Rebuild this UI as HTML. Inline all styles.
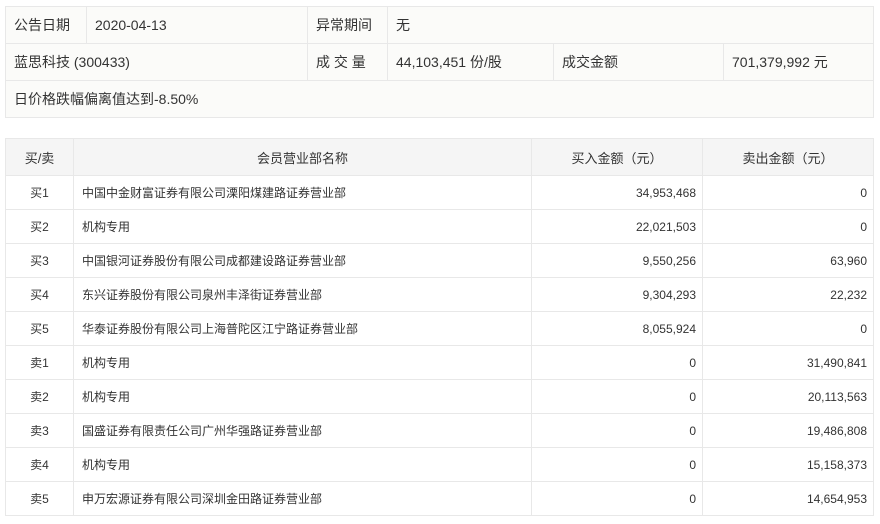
<!DOCTYPE html>
<html><head><meta charset="utf-8"><style>
body{margin:0;background:#fff;font-family:"Liberation Sans","Noto Sans CJK SC",sans-serif;color:#333;}
table{border-collapse:collapse;position:absolute;left:5px;table-layout:fixed;}
td,th{border:1px solid #e8e8e8;padding:0 8px;white-space:nowrap;overflow:hidden;font-weight:normal;}
#t1{top:6px;width:868px;background:#fbfbf9;font-size:14px;}
#t1 td{height:36px;}
#t2{top:138px;width:868px;font-size:12px;}
#t2 th{height:36px;background:#f5f5f5;font-size:13px;text-align:center;}
#t2 td{height:33px;}
.c{text-align:center}.r{text-align:right;padding-right:6px}
</style></head><body>
<table id="t1">
<colgroup><col style="width:81px"><col style="width:221px"><col style="width:80px"><col style="width:166px"><col style="width:170px"><col style="width:150px"></colgroup>
<tr><td>公告日期</td><td>2020-04-13</td><td>异常期间</td><td colspan="3">无</td></tr>
<tr><td colspan="2">蓝思科技 (300433)</td><td>成 交 量</td><td>44,103,451 份/股</td><td>成交金额</td><td>701,379,992 元</td></tr>
<tr><td colspan="6">日价格跌幅偏离值达到-8.50%</td></tr>
</table>
<table id="t2">
<colgroup><col style="width:68px"><col style="width:458px"><col style="width:171px"><col style="width:171px"></colgroup>
<tr><th>买/卖</th><th>会员营业部名称</th><th>买入金额（元）</th><th>卖出金额（元）</th></tr>
<tr><td class="c">买1</td><td>中国中金财富证券有限公司溧阳煤建路证券营业部</td><td class="r">34,953,468</td><td class="r">0</td></tr>
<tr><td class="c">买2</td><td>机构专用</td><td class="r">22,021,503</td><td class="r">0</td></tr>
<tr><td class="c">买3</td><td>中国银河证券股份有限公司成都建设路证券营业部</td><td class="r">9,550,256</td><td class="r">63,960</td></tr>
<tr><td class="c">买4</td><td>东兴证券股份有限公司泉州丰泽街证券营业部</td><td class="r">9,304,293</td><td class="r">22,232</td></tr>
<tr><td class="c">买5</td><td>华泰证券股份有限公司上海普陀区江宁路证券营业部</td><td class="r">8,055,924</td><td class="r">0</td></tr>
<tr><td class="c">卖1</td><td>机构专用</td><td class="r">0</td><td class="r">31,490,841</td></tr>
<tr><td class="c">卖2</td><td>机构专用</td><td class="r">0</td><td class="r">20,113,563</td></tr>
<tr><td class="c">卖3</td><td>国盛证券有限责任公司广州华强路证券营业部</td><td class="r">0</td><td class="r">19,486,808</td></tr>
<tr><td class="c">卖4</td><td>机构专用</td><td class="r">0</td><td class="r">15,158,373</td></tr>
<tr><td class="c">卖5</td><td>申万宏源证券有限公司深圳金田路证券营业部</td><td class="r">0</td><td class="r">14,654,953</td></tr>
</table>
</body></html>
